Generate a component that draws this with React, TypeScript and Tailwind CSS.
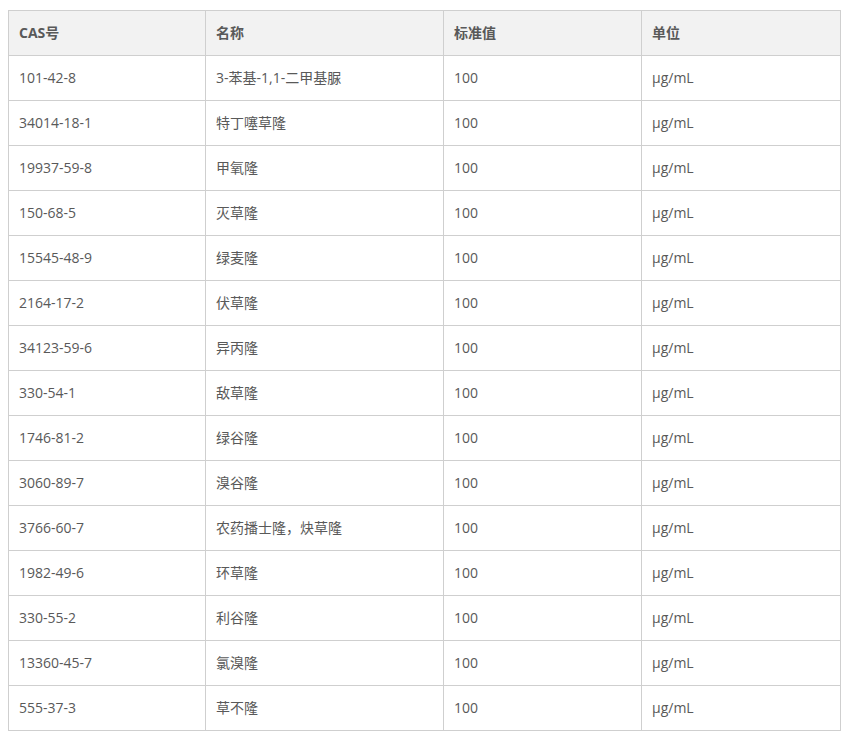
import React from "react";

const rows: [string, string][] = [
  ["101-42-8", "3-苯基-1,1-二甲基脲"],
  ["34014-18-1", "特丁噻草隆"],
  ["19937-59-8", "甲氧隆"],
  ["150-68-5", "灭草隆"],
  ["15545-48-9", "绿麦隆"],
  ["2164-17-2", "伏草隆"],
  ["34123-59-6", "异丙隆"],
  ["330-54-1", "敌草隆"],
  ["1746-81-2", "绿谷隆"],
  ["3060-89-7", "溴谷隆"],
  ["3766-60-7", "农药播士隆，炔草隆"],
  ["1982-49-6", "环草隆"],
  ["330-55-2", "利谷隆"],
  ["13360-45-7", "氯溴隆"],
  ["555-37-3", "草不隆"],
];

export default function App() {
  const cell = "border border-[#cfcfcf] h-[45px] px-[10px] pt-0 pb-[2px] text-left align-middle";
  return (
    <div
      className="bg-white w-[849px] h-[742px] pt-[10px] pl-[8px]"
      style={{ fontFamily: '"Open Sans", "Noto Sans CJK SC", sans-serif' }}
    >
      <table className="border-collapse table-fixed w-[832px] text-[14px] text-[#595959]">
        <colgroup>
          <col className="w-[197px]" />
          <col className="w-[238px]" />
          <col className="w-[198px]" />
          <col className="w-[199px]" />
        </colgroup>
        <thead>
          <tr className="bg-[#f2f2f2]">
            <th className={cell + " font-bold"}>CAS号</th>
            <th className={cell + " font-bold"}>名称</th>
            <th className={cell + " font-bold"}>标准值</th>
            <th className={cell + " font-bold"}>单位</th>
          </tr>
        </thead>
        <tbody>
          {rows.map(([cas, name]) => (
            <tr key={cas}>
              <td className={cell}>{cas}</td>
              <td className={cell}>{name}</td>
              <td className={cell}>100</td>
              <td className={cell}>μg/mL</td>
            </tr>
          ))}
        </tbody>
      </table>
    </div>
  );
}
